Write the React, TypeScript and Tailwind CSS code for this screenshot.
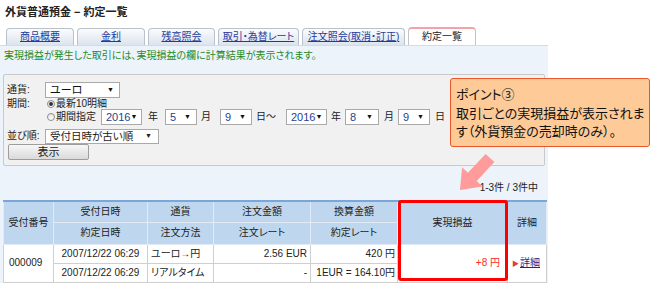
import React from 'react';

const tabs = [
  { label: '商品概要', w: 'w-[68px]' },
  { label: '金利', w: 'w-[68px]' },
  { label: '残高照会', w: 'w-[67px]' },
  { label: '取引・為替レート', w: 'w-[81px]' },
  { label: '注文照会(取消・訂正)', w: 'w-[103px]' },
];

const Sel: React.FC<{ w: string; text: string; num?: boolean }> = ({ w, text, num }) => (
  <div className={`${w} h-[16px] shrink-0 flex items-center justify-between border border-[#a9a9a9] bg-white pl-[4px] pr-[5px] ${num ? 'text-[11px] text-[#1f3f8f]' : 'text-[11px] text-[#111]'}`}>
    <span className="leading-[14px] whitespace-nowrap">{text}</span>
    <span className="text-[7px] leading-[8px] text-[#111]">▼</span>
  </div>
);

const Radio: React.FC<{ checked?: boolean }> = ({ checked }) => (
  <span className="w-[8px] h-[8px] shrink-0 rounded-full border border-[#8c8c8c] bg-gradient-to-b from-[#e6e6e6] to-white flex items-center justify-center">
    {checked && <span className="w-[4px] h-[4px] rounded-full bg-[#333]" />}
  </span>
);

const th = 'bg-[#bed7ef] border border-[#e2ebf5] font-normal text-[#222] text-center p-0';
const td = 'bg-white border border-[#cfcfcf] p-0 text-[#222]';

export default function App() {
  return (
    <div className="relative w-[650px] h-[283px] overflow-hidden bg-white font-[family-name:'Liberation_Sans','Noto_Sans_CJK_JP',sans-serif] [font-feature-settings:'palt'] text-[#222]">
      {/* title */}
      <div className="h-[28px] pl-[5px] pt-[5px] text-[11px] leading-[14px] font-bold text-[#222]">外貨普通預金 − 約定一覧</div>

      {/* tabs */}
      <div className="flex items-end gap-[3px] pl-[6px] h-[17px]">
        {tabs.map((t) => (
          <div key={t.label} className={`${t.w} h-[17px] shrink-0 rounded-t-[4px] border border-b-0 border-[#b9c2cc] bg-gradient-to-b from-[#fbfcfd] to-[#dbe4ee] flex items-center justify-center`}>
            <span className="text-[10px] leading-[12px] text-[#1e3c9c] underline whitespace-nowrap">{t.label}</span>
          </div>
        ))}
        <div className="w-[68px] h-[18px] shrink-0 rounded-t-[4px] border border-b-0 border-[#c4c4c4] border-t-2 border-t-[#f2a4a4] bg-white flex items-center justify-center">
          <span className="text-[10px] leading-[12px] text-[#222]">約定一覧</span>
        </div>
      </div>

      {/* panel */}
      <div className="w-[548px] h-[238px] bg-[#edf3fb] border-t border-[#d3dbe4] pt-[2px]">
        <div className="pl-[4px] text-[10px] leading-[16px] text-[#1f8a1f] whitespace-nowrap">
          実現損益が発生した取引には、実現損益の欄に計算結果が表示されます。
        </div>

        {/* search form */}
        <div className="mx-[3px] mt-[10px] h-[92px] rounded-[2px] border border-[#c9c9c9] bg-[#f1f1f1] pl-[3px] pt-[7px] text-[10px]">
          <div className="flex items-center h-[16px]">
            <span className="w-[38px] leading-[12px]">通貨:</span>
            <Sel w="w-[75px]" text="ユーロ" />
          </div>
          <div className="flex items-center h-[11px]">
            <span className="w-[38px] leading-[12px]">期間:</span>
            <span className="ml-[2px]"><Radio checked /></span>
            <span className="ml-[1px] leading-[11px]">最新10明細</span>
          </div>
          <div className="flex items-center h-[16px]">
            <span className="w-[38px]" />
            <span className="ml-[2px]"><Radio /></span>
            <span className="ml-[1px] leading-[12px] w-[45px]">期間指定</span>
            <Sel w="w-[41px]" text="2016" num />
            <span className="ml-[6px] w-[10px] leading-[12px]">年</span>
            <span className="ml-[7px]"><Sel w="w-[32px]" text="5" num /></span>
            <span className="ml-[4px] w-[10px] leading-[12px]">月</span>
            <span className="ml-[9px]"><Sel w="w-[32px]" text="9" num /></span>
            <span className="ml-[4px] w-[26px] leading-[12px] whitespace-nowrap">日～</span>
            <span className="ml-[4px]"><Sel w="w-[41px]" text="2016" num /></span>
            <span className="ml-[4px] w-[10px] leading-[12px]">年</span>
            <span className="ml-[4px]"><Sel w="w-[34px]" text="8" num /></span>
            <span className="ml-[5px] w-[10px] leading-[12px]">月</span>
            <span className="ml-[4px]"><Sel w="w-[32px]" text="9" num /></span>
            <span className="ml-[5px] w-[10px] leading-[12px]">日</span>
          </div>
          <div className="flex items-center h-[14px] mt-[4px]">
            <span className="w-[38px] leading-[12px] whitespace-nowrap">並び順:</span>
            <div className="w-[114px] h-[15px] flex items-center justify-between border border-[#a9a9a9] bg-white pl-[4px] pr-[6px] text-[10.5px]">
              <span className="leading-[13px] whitespace-nowrap">受付日時が古い順</span>
              <span className="text-[7px] leading-[8px]">▼</span>
            </div>
          </div>
          <div className="mt-[1px] ml-[1px] w-[81px] h-[16px] rounded-[2px] border border-[#9d9d9d] bg-gradient-to-b from-[#f7f7f7] to-[#dadada] flex items-center justify-center text-[11px] leading-[13px]">
            表示
          </div>
        </div>

        {/* count */}
        <div className="mt-[15px] h-[14px] pr-[10px] text-right text-[10px] leading-[14px]">1-3件 / 3件中</div>

        {/* result table */}
        <div className="relative mx-[3px] mt-[5px]">
          <table className="w-[543px] table-fixed border-collapse text-[10px] leading-[12px]">
            <colgroup>
              <col className="w-[50px]" />
              <col className="w-[94px]" />
              <col className="w-[66px]" />
              <col className="w-[97px]" />
              <col className="w-[87px]" />
              <col className="w-[110px]" />
              <col className="w-[39px]" />
            </colgroup>
            <thead>
              <tr className="h-[21px]">
                <th rowSpan={2} className={`${th} border-t-2 border-t-[#7aa6d8]`}>受付番号</th>
                <th className={`${th} border-t-2 border-t-[#7aa6d8]`}>受付日時</th>
                <th className={`${th} border-t-2 border-t-[#7aa6d8]`}>通貨</th>
                <th className={`${th} border-t-2 border-t-[#7aa6d8]`}>注文金額</th>
                <th className={`${th} border-t-2 border-t-[#7aa6d8]`}>換算金額</th>
                <th rowSpan={2} className={`${th} border-t-2 border-t-[#7aa6d8]`}>実現損益</th>
                <th rowSpan={2} className={`${th} border-t-2 border-t-[#7aa6d8]`}>詳細</th>
              </tr>
              <tr className="h-[22px]">
                <th className={th}>約定日時</th>
                <th className={th}>注文方法</th>
                <th className={th}>注文レート</th>
                <th className={th}>約定レート</th>
              </tr>
            </thead>
            <tbody>
              <tr className="h-[19px]">
                <td rowSpan={2} className={`${td} pl-[5px]`}>000009</td>
                <td className={`${td} text-center`}>2007/12/22 06:29</td>
                <td className={`${td} pl-[3px]`}>ユーロ→円</td>
                <td className={`${td} text-right pr-[3px]`}>2.56 EUR</td>
                <td className={`${td} text-right pr-[2px]`}>420 円</td>
                <td rowSpan={2} className={`${td} text-right pr-[7px] text-[#ff2a2a]`}>+8 円</td>
                <td rowSpan={2} className={`${td} pl-[4px] whitespace-nowrap`}>
                  <span className="text-[#e23c3c] text-[7px] mr-[1px]">▶</span>
                  <span className="text-[#1c2a8c] underline">詳細</span>
                </td>
              </tr>
              <tr className="h-[19px]">
                <td className={`${td} text-center`}>2007/12/22 06:29</td>
                <td className={`${td} pl-[3px]`}>リアルタイム</td>
                <td className={`${td} text-right pr-[3px]`}>-</td>
                <td className={`${td} text-right pr-[2px] whitespace-nowrap`}>1EUR = 164.10円</td>
              </tr>
            </tbody>
          </table>
          {/* highlight */}
          <div className="absolute left-[395px] top-0 w-[110px] h-[81px] rounded-[3px] border-[3px] border-[#ff0000] pointer-events-none" />
        </div>
      </div>

      {/* callout */}
      <div className="absolute left-[450px] top-[78px] w-[200px] h-[69px] rounded-[3px] border border-[#e9572a] bg-[#fdca98] pl-[5px] pt-[7px] text-[13px] leading-[18.5px] text-[#111]">
        <div className="whitespace-nowrap">ポイント③</div>
        <div className="whitespace-nowrap">取引ごとの実現損益が表示されま</div>
        <div className="whitespace-nowrap">す（外貨預金の売却時のみ）。</div>
      </div>

      {/* arrow */}
      <svg className="absolute left-[450px] top-[148px]" width="50" height="50" viewBox="0 0 50 50">
        <polygon points="35.6,5.9 44.4,14.1 26.7,33.0 32.5,38.5 10,42 12.1,19.3 17.9,24.8" fill="#ff9b9b" />
      </svg>
    </div>
  );
}
